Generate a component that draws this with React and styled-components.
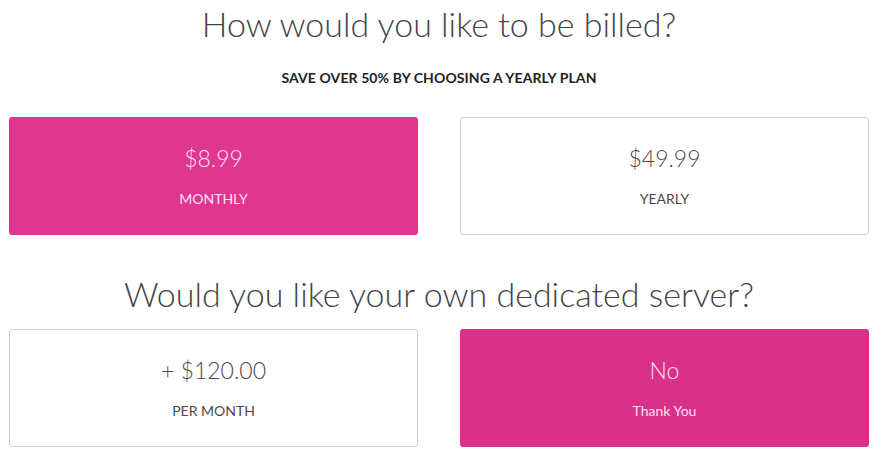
import styled, { createGlobalStyle } from 'styled-components'

const GlobalStyle = createGlobalStyle`
  body {
    margin: 0;
    background: #fff;
    font-family: 'Lato', 'Open Sans', sans-serif;
  }
`

const plans = [
  { price: '$8.99', label: 'MONTHLY', active: true },
  { price: '$49.99', label: 'YEARLY', active: false },
]

const servers = [
  { price: '+ $120.00', label: 'PER MONTH', active: false },
  { price: 'No', label: 'Thank You', active: true, plain: true },
]

export default function App() {
  return (
    <Page>
      <GlobalStyle />
      <Heading>How would you like to be billed?</Heading>
      <Note>SAVE OVER 50% BY CHOOSING A YEARLY PLAN</Note>
      <Options>
        {plans.map((p) => (
          <Card key={p.label} $active={p.active}>
            <Price>{p.price}</Price>
            <Label>{p.label}</Label>
          </Card>
        ))}
      </Options>
      <Heading $second>Would you like your own dedicated server?</Heading>
      <Options>
        {servers.map((p) => (
          <Card key={p.label} $active={p.active} $deep={p.plain}>
            <Price>{p.price}</Price>
            <Label>{p.label}</Label>
          </Card>
        ))}
      </Options>
    </Page>
  )
}

const Page = styled.div`
  width: 881px;
  padding: 0 12px 0 9px;
  box-sizing: border-box;
`

const Heading = styled.h1`
  margin: ${(p) => (p.$second ? '39px 0 15px' : '4px 0 0')};
  text-align: center;
  font-size: 34px;
  line-height: 40px;
  font-weight: 300;
  color: #444;
`

const Note = styled.div`
  margin: 26px 0 31px;
  text-align: center;
  font-size: 14px;
  line-height: 16px;
  font-weight: 700;
  letter-spacing: 0.1px;
  color: #222;
`

const Options = styled.div`
  display: grid;
  grid-template-columns: 1fr 1fr;
  gap: 42px;
`

const Card = styled.div`
  height: 118px;
  box-sizing: border-box;
  border-radius: 3px;
  border: 1px solid ${(p) => (p.$active ? 'transparent' : '#cfcfcf')};
  background: ${(p) => (p.$active ? (p.$deep ? '#d9308a' : '#df3690') : '#fff')};
  color: ${(p) => (p.$active ? '#fbe3f0' : '#4a4a4a')};
  display: flex;
  flex-direction: column;
  align-items: center;
  justify-content: center;
  gap: 21px;
`

const Price = styled.div`
  font-size: 23px;
  line-height: 24px;
  font-weight: 300;
`

const Label = styled.div`
  font-size: 14px;
  line-height: 16px;
  font-weight: 400;
`
